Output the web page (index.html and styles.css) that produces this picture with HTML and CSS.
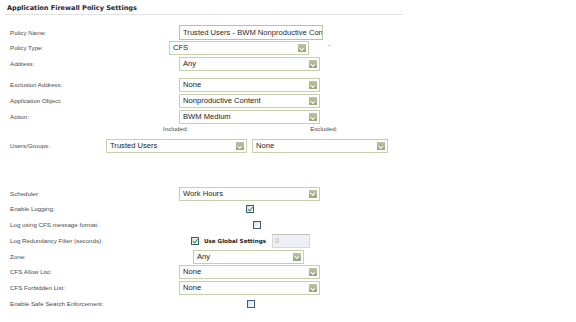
FILE: index.html
```html
<!DOCTYPE html>
<html>
<head>
<meta charset="utf-8">
<link rel="stylesheet" href="styles.css">
</head>
<body>
<div class="panel">
  <div class="title">Application Firewall Policy Settings</div>
  <div class="form">
    <div class="row h15">
      <span class="label">Policy Name:</span>
      <div class="ctl"><span class="text-input m73">Trusted Users - BWM Nonproductive Con</span></div>
    </div>
    <div class="row">
      <span class="label">Policy Type:</span>
      <div class="ctl"><span class="select m63 w140">CFS<i class="arrow"></i></span><span class="tick">`</span></div>
    </div>
    <div class="row">
      <span class="label">Address:</span>
      <div class="ctl"><span class="select m73">Any<i class="arrow"></i></span></div>
    </div>
    <div class="gap5"></div>
    <div class="row">
      <span class="label">Exclusion Address:</span>
      <div class="ctl"><span class="select m73">None<i class="arrow"></i></span></div>
    </div>
    <div class="row">
      <span class="label">Application Object:</span>
      <div class="ctl"><span class="select m73">Nonproductive Content<i class="arrow"></i></span></div>
    </div>
    <div class="row">
      <span class="label">Action:</span>
      <div class="ctl"><span class="select m73">BWM Medium<i class="arrow"></i></span></div>
    </div>
    <div class="row sub">
      <span class="label"></span>
      <div class="ctl"><span class="inc">Included:</span><span class="exc">Excluded:</span></div>
    </div>
    <div class="row">
      <span class="label">Users/Groups:</span>
      <div class="ctl"><span class="select">Trusted Users<i class="arrow"></i></span><span class="select m5 w136">None<i class="arrow"></i></span></div>
    </div>
    <div class="gap32"></div>
    <div class="row h15">
      <span class="label">Scheduler:</span>
      <div class="ctl"><span class="select m73">Work Hours<i class="arrow"></i></span></div>
    </div>
    <div class="row">
      <span class="label">Enable Logging:</span>
      <div class="ctl"><span class="cb checked m140"></span></div>
    </div>
    <div class="row">
      <span class="label">Log using CFS message format:</span>
      <div class="ctl"><span class="cb m147"></span></div>
    </div>
    <div class="row">
      <span class="label">Log Redundancy Filter (seconds):</span>
      <div class="ctl"><span class="cb checked m85"></span><span class="global">Use Global Settings</span><span class="disabled-input">0</span></div>
    </div>
    <div class="row h15">
      <span class="label">Zone:</span>
      <div class="ctl"><span class="select m87 w111">Any<i class="arrow"></i></span></div>
    </div>
    <div class="row">
      <span class="label">CFS Allow List:</span>
      <div class="ctl"><span class="select m73">None<i class="arrow"></i></span></div>
    </div>
    <div class="row">
      <span class="label">CFS Forbidden List:</span>
      <div class="ctl"><span class="select m73">None<i class="arrow"></i></span></div>
    </div>
    <div class="row">
      <span class="label">Enable Safe Search Enforcement:</span>
      <div class="ctl"><span class="cb m141"></span></div>
    </div>
  </div>
</div>
</body>
</html>
```

FILE: styles.css
```css
html, body {
  margin: 0;
  padding: 0;
  background: #ffffff;
}
body {
  width: 576px;
  height: 322px;
  overflow: hidden;
  font-family: "Liberation Sans", "DejaVu Sans", sans-serif;
  color: #333;
}
.panel {
  padding: 0;
}
.title {
  margin-left: 5px;
  width: 398px;
  height: 15px;
  box-sizing: border-box;
  border-bottom: 1px solid #e2e2e2;
  padding: 4px 0 0 2px;
  font-family: "DejaVu Sans", sans-serif;
  font-weight: bold;
  font-size: 6.5px;
  line-height: 8px;
  color: #1d2434;
}
.form {
  padding-top: 10px;
}
.row {
  display: grid;
  grid-template-columns: 96px auto;
  padding-left: 10px;
  height: 16px;
  align-items: center;
}
.row.h15 { height: 15px; }
.row.sub { height: 13px; align-items: start; }
.row.sub .ctl { align-items: flex-start; }
.gap5 { height: 5px; }
.gap32 { height: 32px; }
.label {
  font-family: "Liberation Sans", sans-serif;
  font-size: 6.2px;
  line-height: 8px;
  color: #4a4a4a;
  white-space: nowrap;
}
.ctl {
  display: flex;
  align-items: center;
  height: 100%;
}
.text-input, .select {
  position: relative;
  display: block;
  box-sizing: border-box;
  height: 14px;
  width: 141px;
  border: 1px solid #c6d0aa;
  background: #fff;
  font-family: "Liberation Sans", sans-serif;
  font-size: 7.6px;
  line-height: 12px;
  padding-left: 3px;
  color: #2a2a2a;
  white-space: nowrap;
  overflow: hidden;
}
.text-input { width: 144px; height: 15px; line-height: 13px; border-color: #b8c29c; }
.select { color: #222; }
.arrow {
  position: absolute;
  right: 2px;
  top: 2px;
  width: 8px;
  height: 8px;
  background: linear-gradient(#b9c4a0, #98a67e);
}
.arrow::after {
  content: "";
  position: absolute;
  left: 2px;
  top: 1.5px;
  width: 2.5px;
  height: 2.5px;
  border-right: 1px solid #fff;
  border-bottom: 1px solid #fff;
  transform: rotate(45deg);
}
.m73 { margin-left: 73px; }
.m63 { margin-left: 63px; }
.m87 { margin-left: 87px; }
.m5 { margin-left: 5px; }
.m140 { margin-left: 140px; }
.m147 { margin-left: 147px; }
.m141 { margin-left: 141px; }
.m85 { margin-left: 85px; }
.w140 { width: 140px; }
.w136 { width: 136px; }
.w111 { width: 111px; }
.tick {
  font-size: 8px;
  line-height: 8px;
  color: #111;
  margin-left: 19px;
  margin-top: 0px;
}
.inc, .exc {
  font-size: 6.2px;
  line-height: 8px;
  color: #4a4a4a;
  margin-top: 0;
}
.inc { margin-left: 57px; }
.exc { margin-left: 122px; }
.cb {
  display: block;
  box-sizing: border-box;
  width: 8px;
  height: 8px;
  border: 1px solid #3a5a80;
  background: linear-gradient(135deg, #dcdcd6, #fff);
  position: relative;
}
.cb.checked::after {
  content: "";
  position: absolute;
  left: 2px;
  top: 0px;
  width: 1.6px;
  height: 3.5px;
  border-right: 1.2px solid #21a121;
  border-bottom: 1.2px solid #21a121;
  transform: rotate(40deg);
}
.global {
  font-family: "DejaVu Sans", sans-serif;
  font-weight: bold;
  font-size: 5.6px;
  color: #222;
  margin-left: 5px;
}
.disabled-input {
  display: block;
  box-sizing: border-box;
  width: 38px;
  height: 14px;
  margin-left: 6px;
  border: 1px solid #d8d8d0;
  border-top-color: #c0c0b8;
  background: #eef0f6;
  color: #b0b0b0;
  font-family: "Liberation Sans", sans-serif;
  font-size: 7.6px;
  line-height: 12px;
  padding-left: 2px;
}
```
